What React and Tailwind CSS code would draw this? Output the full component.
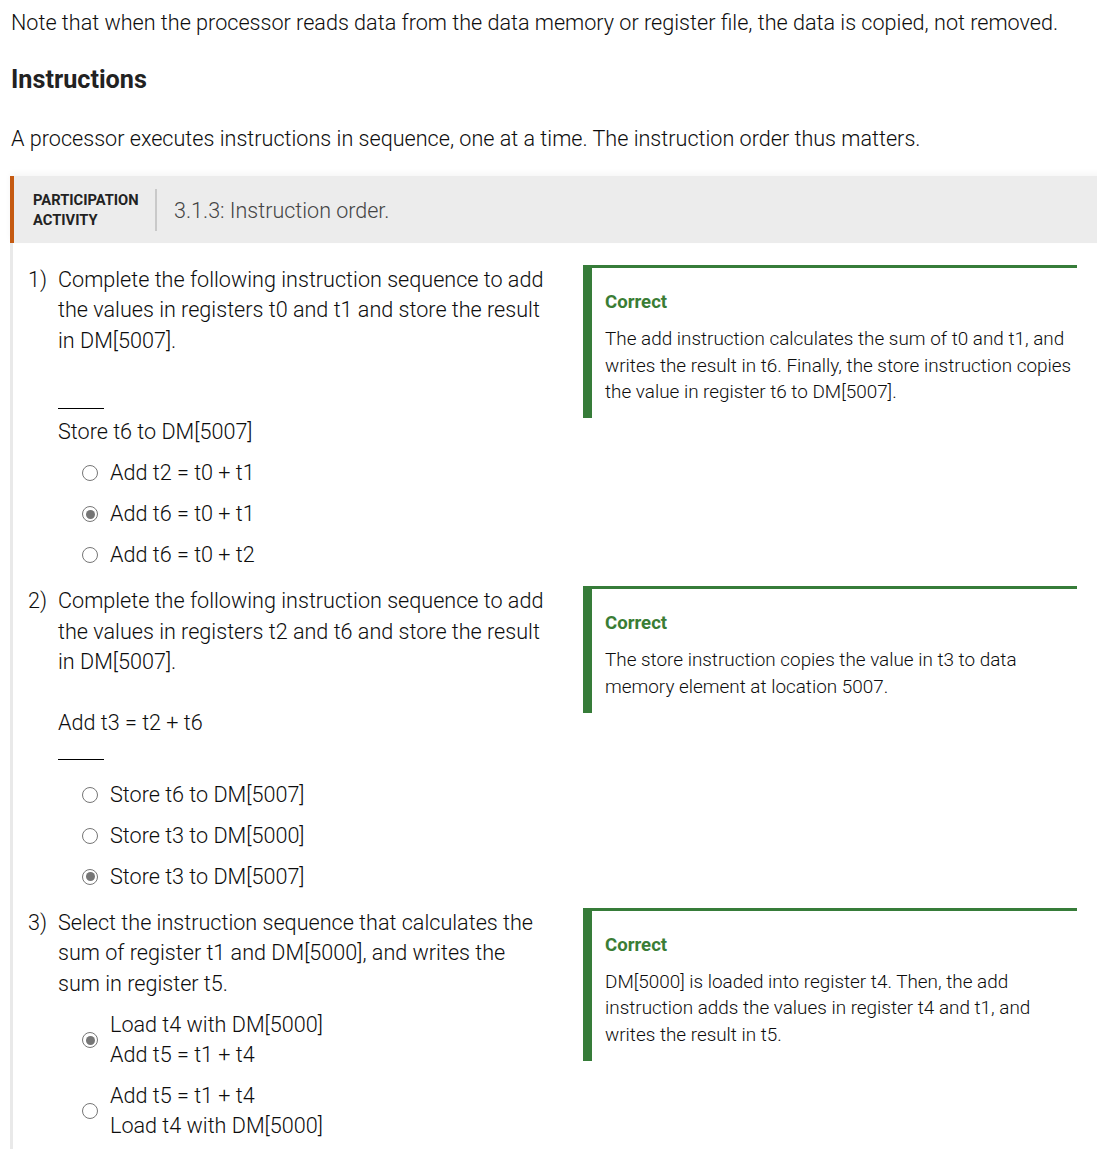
import React from 'react';

const questions = [
  {
    num: '1)',
    text: ['Complete the following instruction sequence to add the values in registers t0 and t1 and store the result in DM[5007].'],
    blankFirst: true,
    given: 'Store t6 to DM[5007]',
    options: [['Add t2 = t0 + t1'], ['Add t6 = t0 + t1'], ['Add t6 = t0 + t2']],
    selected: 1,
    feedback: 'The add instruction calculates the sum of t0 and t1, and writes the result in t6. Finally, the store instruction copies the value in register t6 to DM[5007].',
  },
  {
    num: '2)',
    text: ['Complete the following instruction sequence to add the values in registers t2 and t6 and store the result in DM[5007].'],
    blankFirst: false,
    given: 'Add t3 = t2 + t6',
    options: [['Store t6 to DM[5007]'], ['Store t3 to DM[5000]'], ['Store t3 to DM[5007]']],
    selected: 2,
    feedback: 'The store instruction copies the value in t3 to data memory element at location 5007.',
  },
  {
    num: '3)',
    text: ['Select the instruction sequence that calculates the sum of register t1 and DM[5000], and writes the sum in register t5.'],
    options: [
      ['Load t4 with DM[5000]', 'Add t5 = t1 + t4'],
      ['Add t5 = t1 + t4', 'Load t4 with DM[5000]'],
    ],
    selected: 0,
    feedback: 'DM[5000] is loaded into register t4. Then, the add instruction adds the values in register t4 and t1, and writes the result in t5.',
  },
];

const Blank = () => <span className="inline-block w-[46px] h-[22px] border-b border-black align-baseline" />;

const Radio = ({ checked }) => (
  <span className="flex items-center justify-center w-[16px] h-[16px] rounded-full border-[1.5px] border-[#767676] bg-white shrink-0">
    {checked && <span className="w-[9px] h-[9px] rounded-full bg-[#767676]" />}
  </span>
);

const Question = ({ q }) => (
  <div className="flex items-start">
    <div className="flex w-[555px] shrink-0">
      <div className="w-[30px] shrink-0 text-[21.6px] leading-[30.4px]">{q.num}</div>
      <div className="w-[493px]">
        <div className="text-[21.6px] leading-[30.4px]">
          {q.text}
          {q.given && (
            <>
              <br />
              <br />
              {q.blankFirst ? (
                <>
                  <Blank />
                  <br />
                  {q.given}
                </>
              ) : (
                <>
                  {q.given}
                  <br />
                  <Blank />
                </>
              )}
            </>
          )}
        </div>
        <div className="flex flex-col gap-[11px] mt-[11px] pl-[24px]">
          {q.options.map((opt, i) => (
            <label key={i} className="flex items-center">
              <Radio checked={q.selected === i} />
              <span className="ml-[12px] text-[21.6px] leading-[30px]">
                {opt.map((l, j) => (
                  <span key={j} className="block">{l}</span>
                ))}
              </span>
            </label>
          ))}
        </div>
      </div>
    </div>
    <div className="w-[494px] shrink-0 border-t-[3px] border-l-[9px] border-[#367c39] pl-[13px] pr-[2px] pt-[21px] pb-[12px]">
      <div className="text-[18.6px] leading-[27px] font-bold text-[#3a7d35]">Correct</div>
      <div className="mt-[10px] text-[18.9px] leading-[26.6px]">{q.feedback}</div>
    </div>
  </div>
);

export default function App() {
  return (
    <div className="bg-white min-h-screen text-[#0d0d0d] font-light font-['Roboto',_'Liberation_Sans',_sans-serif] overflow-hidden">
      <div className="pl-[11px]">
        <p className="pt-[8px] text-[21.6px] leading-[30px]">
          Note that when the processor reads data from the data memory or register file, the data is copied, not removed.
        </p>
        <h3 className="mt-[26px] text-[25.2px] leading-[32px] font-bold text-[#222]">Instructions</h3>
        <p className="mt-[28px] text-[21.6px] leading-[30px]">
          A processor executes instructions in sequence, one at a time. The instruction order thus matters.
        </p>
      </div>
      <div className="ml-[10px] mt-[22px] w-[1200px]">
        <div className="flex items-center h-[67px] bg-[#ececec] border-l-4 border-[#c55a11] pl-[19px] shadow-[0_-3px_6px_rgba(0,0,0,0.04)]">
          <div className="w-[106px] text-[14.7px] leading-[20px] font-bold text-[#222]">
            PARTICIPATION
            <br />
            ACTIVITY
          </div>
          <div className="ml-[16px] w-[2px] h-[42px] bg-[#c9c9c9]" />
          <div className="ml-[17px] pt-[3px] text-[21.5px] text-[#444]">3.1.3: Instruction order.</div>
        </div>
        <div className="border-l-[3px] border-[#e9e9e9] pl-[15px] pt-[22px] pb-[20px] flex flex-col gap-[16px]">
          {questions.map((q, i) => (
            <Question key={i} q={q} />
          ))}
        </div>
      </div>
    </div>
  );
}
